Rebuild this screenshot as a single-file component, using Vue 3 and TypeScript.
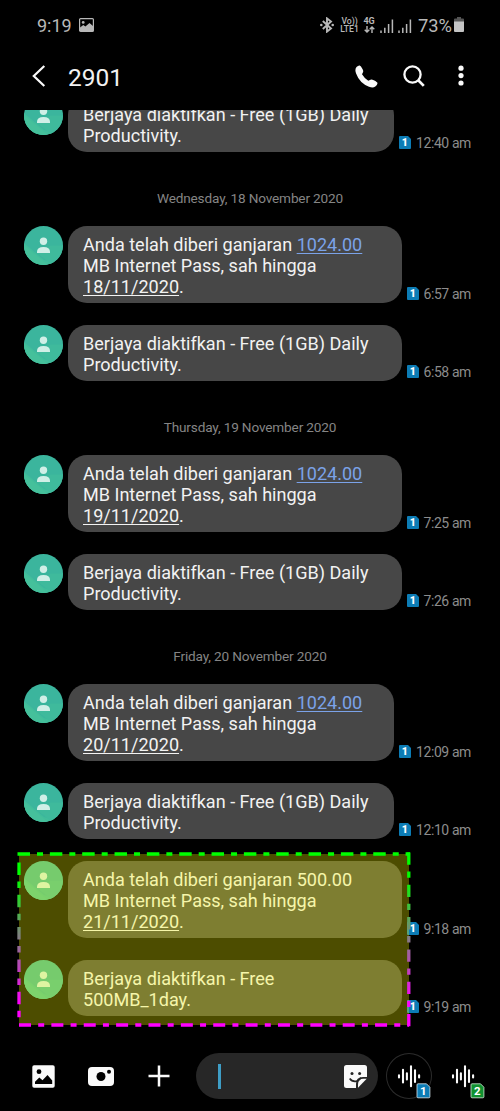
<script setup lang="ts">
interface Part {
  text: string
  kind?: 'link' | 'date'
}
interface Message {
  lines: Part[][]
  time: string
}
interface Group {
  label?: string
  messages: Message[]
}

const reward = (amount: string, date: string, time: string, linked = true): Message => ({
  lines: [
    [{ text: 'Anda telah diberi ganjaran ' }, { text: amount, kind: linked ? 'link' : undefined }],
    [{ text: 'MB Internet Pass, sah hingga' }],
    [{ text: date, kind: 'date' }, { text: '.' }],
  ],
  time,
})
const productivity = (time: string): Message => ({
  lines: [[{ text: 'Berjaya diaktifkan - Free (1GB) Daily' }], [{ text: 'Productivity.' }]],
  time,
})

const groups: Group[] = [
  { messages: [productivity('12:40 am')] },
  {
    label: 'Wednesday, 18 November 2020',
    messages: [reward('1024.00', '18/11/2020', '6:57 am'), productivity('6:58 am')],
  },
  {
    label: 'Thursday, 19 November 2020',
    messages: [reward('1024.00', '19/11/2020', '7:25 am'), productivity('7:26 am')],
  },
  {
    label: 'Friday, 20 November 2020',
    messages: [
      reward('1024.00', '20/11/2020', '12:09 am'),
      productivity('12:10 am'),
      reward('500.00', '21/11/2020', '9:18 am', false),
      {
        lines: [[{ text: 'Berjaya diaktifkan - Free' }], [{ text: '500MB_1day.' }]],
        time: '9:19 am',
      },
    ],
  },
]
</script>

<template>
  <div class="phone">
    <div class="status">
      <span class="clock">9:19</span>
      <svg class="pic" width="15" height="14" viewBox="0 0 15 14">
        <rect x=".6" y=".6" width="13.8" height="12.8" rx="1" fill="none" stroke="#b8b8b8" stroke-width="1.2" />
        <circle cx="4.2" cy="4.4" r="1.4" fill="#b8b8b8" />
        <path d="M1 12V9.500L4.3 7L6.4 8.500L10.5 5L14 8V13H1Z" fill="#b8b8b8" />
      </svg>
      <span class="spacer"></span>
      <svg class="bt" width="14" height="16" viewBox="0 0 14 16">
        <path d="M2.800 4L11 11.5L7 14.600V1.400L11 4.500L2.800 12" fill="none" stroke="#b8b8b8" stroke-width="1.900" />
        <circle cx="1.300" cy="8" r="1.300" fill="#b8b8b8" />
        <circle cx="12.700" cy="8" r="1.300" fill="#b8b8b8" />
      </svg>
      <div class="volte"><span>Vo))</span><span>LTE1</span></div>
      <div class="net">
        <span>4G</span>
        <svg width="11" height="7" viewBox="0 0 11 7">
          <path d="M3 0V6M.7 3.700L3 6L5.300 3.700M8 7V1M5.700 3.300L8 1L10.300 3.300" fill="none" stroke="#b8b8b8" stroke-width="1.400" />
        </svg>
      </div>
      <svg v-for="n in 2" :key="n" class="signal" width="14" height="14" viewBox="0 0 14 14">
        <path d="M1 11.500V14M4.800 8.800V14M8.600 5V14M12.400 .5V14" stroke="#b8b8b8" stroke-width="1.500" />
      </svg>
      <span class="percent">73%</span>
      <svg class="battery" width="10" height="16" viewBox="0 0 10 16">
        <path d="M3 0H7V1.500H9Q10 1.500 10 2.500V5H0V2.500Q0 1.500 1 1.500H3Z" fill="#555" />
        <path d="M0 4.500H10V14Q10 15 9 15H1Q0 15 0 14Z" fill="#c4c4c4" />
      </svg>
    </div>

    <header class="bar">
      <svg class="back" width="14" height="22" viewBox="0 0 14 22">
        <path d="M12.300 1L1.800 11L12.300 21" fill="none" stroke="#fafafa" stroke-width="2.200" />
      </svg>
      <h1>2901</h1>
      <span class="spacer"></span>
      <svg class="call" width="23" height="23" viewBox="0 0 23 23">
        <path d="M1.500 2Q3.200 .3 4.700 .5Q5.800 .8 7.600 4.200Q8.600 6 8 7.200L7 9.300Q9.500 13.500 13.300 15.800L15.500 14.700Q16.700 14.200 18.800 15.200Q22.600 17 22.500 18.300Q22.300 20 20.300 21.600Q18 23.200 14 21.800Q4.500 18 1.100 8.500Q-.5 4.300 1.500 2Z" fill="#fafafa" />
      </svg>
      <svg class="search" width="22" height="22" viewBox="0 0 22 22">
        <circle cx="9.500" cy="9.500" r="8.100" fill="none" stroke="#fafafa" stroke-width="2.300" />
        <path d="M15 15L20.800 20.900" stroke="#fafafa" stroke-width="2.700" />
      </svg>
      <svg class="more" width="6" height="22" viewBox="0 0 6 22">
        <circle v-for="y in [3.2, 10.6, 18]" :key="y" cx="3" :cy="y" r="2.600" fill="#fafafa" />
      </svg>
    </header>

    <main class="thread">
      <section v-for="(group, g) in groups" :key="g">
        <div v-if="group.label" class="day">{{ group.label }}</div>
        <div class="stack">
          <article v-for="(msg, m) in group.messages" :key="m" class="message">
            <svg class="avatar" width="39" height="39" viewBox="0 0 39 39">
              <defs>
                <clipPath :id="`disc-${g}-${m}`"><circle cx="19.500" cy="19.500" r="19.500" /></clipPath>
              </defs>
              <g :clip-path="`url(#disc-${g}-${m})`">
                <rect width="39" height="39" fill="#3bb59d" />
                <path d="M0 17L20 34L39 39H0Z" fill="#41bd9b" />
                <path d="M27 19.500H39V39H28L13 27Z" fill="#3fba9c" />
                <path d="M0 19L24 39H0Z" fill="#45c09b" />
              </g>
              <circle cx="19.500" cy="15.300" r="3.700" fill="#d0efe7" />
              <path d="M13 27V25.800Q13 21 19.500 21T26 25.800V27Z" fill="#d0efe7" />
            </svg>
            <div class="bubble">
              <p v-for="(line, l) in msg.lines" :key="l"><span v-for="(part, p) in line" :key="p" :class="part.kind">{{ part.text }}</span></p>
            </div>
            <div class="meta" :class="{ wide: msg.time.length > 7 }">
              <svg class="sim" width="12" height="13" viewBox="0 0 12 13">
                <path d="M1 0H9L12 3V12Q12 13 11 13H1Q0 13 0 12V1Q0 0 1 0Z" fill="#0c7cb5" />
                <text x="5.900" y="10.400" text-anchor="middle" class="sim-number">1</text>
              </svg>
              <time>{{ msg.time }}</time>
            </div>
          </article>
        </div>
      </section>
      <svg class="highlight" width="396" height="176" viewBox="16 851 396 176">
        <defs>
          <linearGradient id="edge" gradientUnits="userSpaceOnUse" x1="0" y1="854" x2="0" y2="1025">
            <stop offset="0" stop-color="#0f0" />
            <stop offset=".14" stop-color="#0f0" />
            <stop offset=".48" stop-color="#808080" />
            <stop offset=".88" stop-color="#f0f" />
            <stop offset="1" stop-color="#f0f" />
          </linearGradient>
        </defs>
        <rect x="19" y="854" width="390" height="171" fill="#ff0" fill-opacity=".3" />
        <g fill="none" stroke-width="3.300">
          <path d="M17.500 854H410" stroke="#0f0" stroke-dasharray="12.500 7 6 6.840" />
          <path d="M19 1025H409" stroke="#f0f" stroke-dasharray="12 7.200 6 7.170" />
          <path d="M19 862.500V1023" stroke="url(#edge)" stroke-dasharray="12.500 6.500 6.500 6.800" />
          <path d="M408.800 852.500V1026.500" stroke="url(#edge)" stroke-dasharray="12.300 6.700 6.300 7" />
        </g>
      </svg>
    </main>

    <footer class="composer">
      <svg class="gallery" width="23" height="23" viewBox="0 0 23 23">
        <rect x=".3" y=".3" width="22.400" height="22.400" rx="1.800" fill="#fafafa" />
        <circle cx="7" cy="6.700" r="2.400" fill="#000" />
        <path d="M3 19V16.800L7.300 12.500L10.500 15.200L15.500 10L20.200 15.500V19Z" fill="#000" />
      </svg>
      <svg class="camera" width="26" height="19" viewBox="0 0 26 19">
        <rect width="26" height="19" rx="4" fill="#fafafa" />
        <circle cx="13" cy="9.500" r="4.500" fill="#000" />
        <circle cx="21" cy="4.700" r="2" fill="#000" />
      </svg>
      <svg class="plus" width="22" height="22" viewBox="0 0 22 22">
        <path d="M11 .5V21.500M.5 11H21.500" stroke="#fafafa" stroke-width="2.500" />
      </svg>
      <div class="field">
        <i class="caret"></i>
        <svg class="sticker" width="23" height="23" viewBox="0 0 23 23">
          <path d="M2.500 0H20.500Q23 0 23 2.500V12H19Q12 12 12 19V23H2.500Q0 23 0 20.500V2.500Q0 0 2.500 0Z" fill="#fafafa" />
          <path d="M22.700 13.800L14 22.700V19.500Q14 13.800 19.500 13.800Z" fill="#fafafa" />
          <circle cx="8" cy="8.500" r="1.500" fill="#252525" />
          <circle cx="15.600" cy="8.500" r="1.500" fill="#252525" />
          <path d="M5.700 13.500Q8 17 12.500 16.200Q15 15.500 17 12.600" fill="none" stroke="#252525" stroke-width="1.600" />
        </svg>
      </div>
      <div v-for="n in 2" :key="n" class="voice" :class="{ ring: n === 1 }">
        <svg width="46" height="46" viewBox="0 0 46 46">
          <path d="M13 22.200V24.400M17 16.800V29.500M20.900 20.200V26.400M25 13.200V33.200M29 17.300V29M33.100 22.200V24.400" stroke="#fafafa" stroke-width="2.100" stroke-linecap="round" />
          <path d="M32 30.800H40.500L43.900 34.200V43.800Q43.900 44.800 42.900 44.800H32Q31 44.800 31 43.800V31.800Q31 30.800 32 30.800Z" :class="n === 1 ? 'tag-one' : 'tag-two'" />
          <text x="37.300" y="41.900" text-anchor="middle" class="tag-number">{{ n }}</text>
        </svg>
      </div>
    </footer>
  </div>
</template>

<style>
html,
body {
  background: #000;
}
</style>

<style scoped>
.phone {
  width: 500px;
  height: 1111px;
  background: #000;
  color: #f2f2f2;
  font-family: Roboto, sans-serif;
  display: flex;
  flex-direction: column;
  overflow: hidden;
}
.phone svg {
  display: block;
  flex: none;
}
.spacer {
  flex: 1;
}
.status {
  height: 50px;
  box-sizing: border-box;
  padding: 0 36px 0 37px;
  display: flex;
  align-items: center;
  color: #b8b8b8;
  font-size: 18px;
}
.clock {
  width: 42px;
}
.bt {
  margin-right: 6px;
}
.volte {
  display: flex;
  flex-direction: column;
  align-items: center;
  font-size: 8.600px;
  line-height: 8px;
  font-weight: 500;
  width: 19px;
}
.net {
  display: flex;
  flex-direction: column;
  align-items: center;
  font-size: 9px;
  line-height: 9px;
  font-weight: 700;
  margin: 0 5px 0 4px;
  width: 12px;
}
.signal {
  margin: 2px 4px 0 0;
}
.percent {
  margin: 1px 2px 0 2px;
  font-size: 18.300px;
}
.bar {
  height: 60px;
  flex: none;
  box-sizing: border-box;
  padding: 0 36px 8px 32px;
  display: flex;
  align-items: center;
}
h1 {
  margin: 3px 0 0 22px;
  font-weight: 400;
  font-size: 24.500px;
  line-height: 28px;
}
.call {
  margin-right: 25px;
}
.search {
  margin-right: 33px;
}
.thread {
  position: relative;
  height: 925px;
  flex: none;
  overflow: hidden;
}
.thread > section:first-child {
  margin-top: -14px;
}
.day {
  height: 74px;
  line-height: 92px;
  text-align: center;
  font-size: 13.600px;
  letter-spacing: -0.150px;
  color: #858585;
}
.stack {
  display: flex;
  flex-direction: column;
  gap: 22px;
}
.message {
  display: flex;
  padding: 0 29px 0 24px;
}
.bubble {
  flex: 1;
  margin-left: 5px;
  padding: 7.700px 0 5.800px 15px;
  border-radius: 19px;
  background: #474747;
  font-size: 18.060px;
}
.bubble p {
  margin: 0;
  line-height: 21.200px;
  white-space: pre;
}
.link,
.date {
  text-decoration: underline;
  text-decoration-thickness: 1px;
  text-underline-offset: 1.500px;
}
.link {
  color: #7ba2e8;
}
.meta {
  display: flex;
  align-items: flex-end;
  margin-left: 5px;
  width: 64px;
}
.meta.wide {
  width: 72px;
}
.sim {
  margin-bottom: 3px;
}
.sim-number {
  font-size: 10.500px;
  font-weight: 900;
  fill: #fff;
}
time {
  flex: 1;
  text-align: right;
  white-space: nowrap;
  font-size: 14px;
  letter-spacing: -0.400px;
  line-height: 18px;
  color: #8c8c8c;
}
.highlight {
  position: absolute;
  left: 16px;
  top: 741px;
}
.composer {
  flex: 1;
  display: flex;
  align-items: center;
  padding: 6px 14px 0 32px;
}
.camera {
  margin-left: 33px;
}
.plus {
  margin-left: 34px;
}
.field {
  width: 183px;
  height: 46px;
  margin-left: 26px;
  border-radius: 23px;
  background: #272727;
  box-sizing: border-box;
  padding: 0 11px 0 22px;
  display: flex;
  align-items: center;
  justify-content: space-between;
}
.caret {
  width: 2.500px;
  height: 25px;
  background: #3e9dc5;
}
.voice {
  margin-left: 8px;
  width: 46px;
  height: 46px;
  border-radius: 50%;
  flex: none;
}
.ring {
  box-shadow: inset 0 0 0 1px #2c2c2c;
}
.tag-one {
  fill: #0c7cb5;
  stroke: #d8e6ee;
  stroke-width: 0.8px;
}
.tag-two {
  fill: #119130;
  stroke: #d4ecd9;
  stroke-width: 0.8px;
}
.tag-number {
  font-size: 11.500px;
  font-weight: 700;
  fill: #fff;
}
</style>
